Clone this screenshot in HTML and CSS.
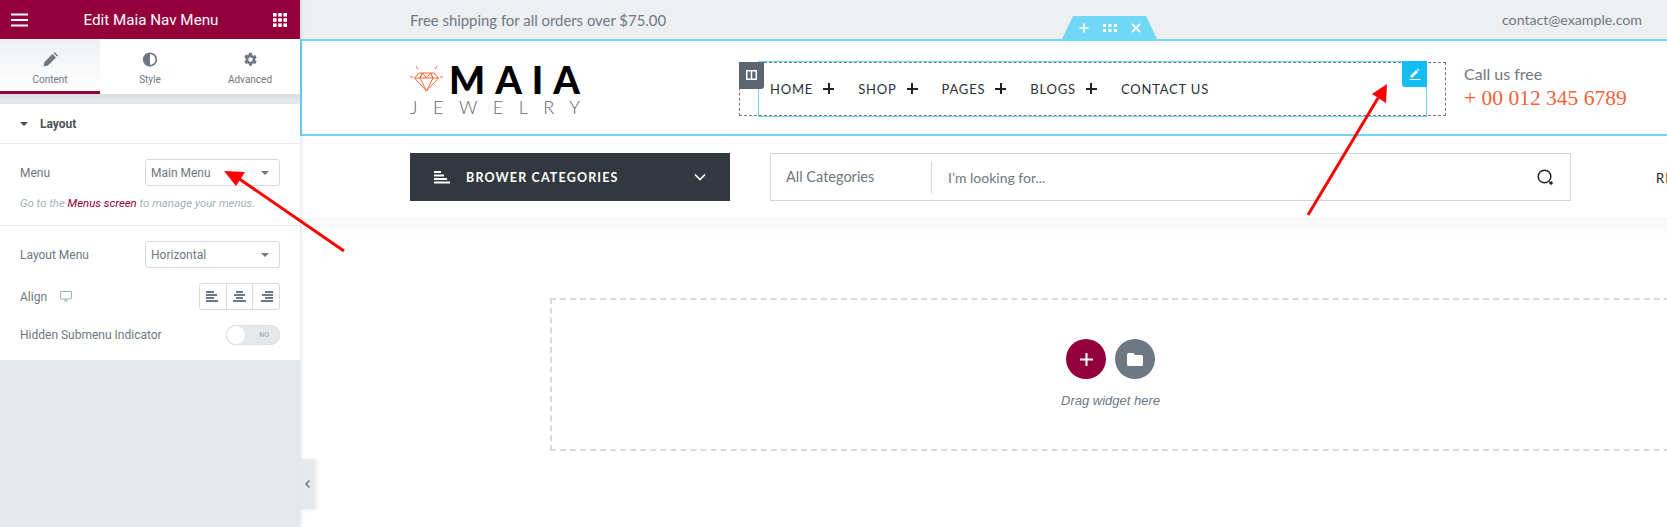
FILE: index.html
```html
<!DOCTYPE html>
<html lang="en">
<head>
<meta charset="utf-8">
<title>Edit Maia Nav Menu</title>
<link rel="stylesheet" href="styles.css">
</head>
<body>
<div class="app">
  <aside class="panel">
    <header class="panel-head">
      <svg class="hd-icon" width="18" height="14" viewBox="0 0 18 14"><path d="M0 1.500h17M0 7h17M0 12.500h17" stroke="#fff" stroke-width="2.200" fill="none"/></svg>
      <span class="panel-title">Edit Maia Nav Menu</span>
      <svg class="hd-icon" width="14" height="14" viewBox="0 0 14 14" fill="#fff"><rect width="3.600" height="3.600"/><rect x="5.200" width="3.600" height="3.600"/><rect x="10.400" width="3.600" height="3.600"/><rect y="5.200" width="3.600" height="3.600"/><rect x="5.200" y="5.200" width="3.600" height="3.600"/><rect x="10.400" y="5.200" width="3.600" height="3.600"/><rect y="10.400" width="3.600" height="3.600"/><rect x="5.200" y="10.400" width="3.600" height="3.600"/><rect x="10.400" y="10.400" width="3.600" height="3.600"/></svg>
    </header>
    <nav class="tabs">
      <div class="tab tab-active">
        <svg width="15" height="15" viewBox="0 0 15 15" fill="#6d7882"><path d="M0.500 14.500l1-4.500 8-8 3.500 3.500-8 8zM10.500 1l1-1 3.500 3.500-1 1z"/></svg>
        <span>Content</span>
      </div>
      <div class="tab">
        <svg width="16" height="16" viewBox="0 0 16 16"><circle cx="8" cy="8" r="6.700" fill="#fff" stroke="#6d7882" stroke-width="1.800"/><path d="M8 1a7 7 0 0 0 0 14z" fill="#6d7882"/></svg>
        <span>Style</span>
      </div>
      <div class="tab">
        <svg width="15" height="15" viewBox="0 0 24 24" fill="#6d7882"><path d="M19.400 13a7.600 7.600 0 0 0 0-2l2.500-1.900-2.400-4.200-3 1.200a7.400 7.400 0 0 0-1.700-1L14.400 1h-4.800l-.4 3.100a7.400 7.400 0 0 0-1.700 1l-3-1.200-2.400 4.200L4.600 11a7.600 7.600 0 0 0 0 2l-2.500 1.900 2.400 4.200 3-1.200a7.400 7.400 0 0 0 1.700 1l.4 3.100h4.800l.4-3.100a7.400 7.400 0 0 0 1.700-1l3 1.200 2.400-4.200zM12 15.500a3.500 3.500 0 1 1 0-7 3.500 3.500 0 0 1 0 7z"/></svg>
        <span>Advanced</span>
      </div>
    </nav>
    <div class="tabs-gap"></div>
    <section class="controls">
      <div class="section-title"><i class="caret caret-dark"></i><span>Layout</span></div>
      <div class="group group-first">
        <div class="row">
          <label>Menu</label>
          <div class="select"><span>Main Menu</span><i class="caret"></i></div>
        </div>
        <p class="help">Go to the <a>Menus screen</a> to manage your menus.</p>
      </div>
      <div class="group group-second">
        <div class="row">
          <label>Layout Menu</label>
          <div class="select"><span>Horizontal</span><i class="caret"></i></div>
        </div>
        <div class="row row-align">
          <label class="align-label">Align
            <svg width="12" height="11" viewBox="0 0 12 11"><path d="M1 .5h10a.5.500 0 0 1 .5.500v6.500a.5.500 0 0 1-.5.500H1a.5.500 0 0 1-.5-.5V1A.5.500 0 0 1 1 .5zM4 10h4" fill="none" stroke="#a4afb7"/><path d="M5.500 8h1v2h-1z" fill="#a4afb7"/></svg>
          </label>
          <div class="align-set">
            <div class="align-btn"><svg width="13" height="11" viewBox="0 0 13 11"><path d="M0 1h8M0 4h11M0 7h8M0 10h12" stroke="#6d7882" stroke-width="1.800"/></svg></div>
            <div class="align-btn"><svg width="13" height="11" viewBox="0 0 13 11"><path d="M3 1h7M1 4h11M3 7h7M0 10h13" stroke="#6d7882" stroke-width="1.800"/></svg></div>
            <div class="align-btn"><svg width="13" height="11" viewBox="0 0 13 11"><path d="M5 1h8M2 4h11M5 7h8M1 10h12" stroke="#6d7882" stroke-width="1.800"/></svg></div>
          </div>
        </div>
        <div class="row row-toggle">
          <label>Hidden Submenu Indicator</label>
          <div class="toggle"><i class="knob"></i><span>NO</span></div>
        </div>
      </div>
    </section>
    <div class="panel-fill"></div>
    <div class="collapse"><svg width="5" height="8" viewBox="0 0 5 8"><path d="M4.500.5L1 4l3.500 3.500" fill="none" stroke="#6d7882" stroke-width="1.500"/></svg></div>
  </aside>

  <main class="canvas">
    <div class="topbar">
      <span>Free shipping for all orders over $75.00</span>
      <span class="email">contact@example.com</span>
    </div>
    <div class="header-band">
      <div class="section-tools">
        <svg width="10" height="10" viewBox="0 0 10 10"><path d="M5 .5v9M.5 5h9" stroke="#fff" stroke-width="1.700"/></svg>
        <svg class="tool-dots" width="14" height="8" viewBox="0 0 14 8" fill="#fff"><rect width="3" height="3"/><rect x="5.500" width="3" height="3"/><rect x="11" width="3" height="3"/><rect y="5" width="3" height="3"/><rect x="5.500" y="5" width="3" height="3"/><rect x="11" y="5" width="3" height="3"/></svg>
        <svg width="10" height="10" viewBox="0 0 10 10"><path d="M1 1l8 8M9 1l-8 8" stroke="#fff" stroke-width="1.800"/></svg>
      </div>
      <div class="logo">
        <div class="logo-top">
          <svg width="33" height="27" viewBox="0 0 33 27" fill="none" stroke="#f26a35" stroke-width="1"><path d="M9 8h15l4.500 5L16.500 26 4.500 13zM4.500 13h24M12.500 8l-2.500 5 6.500 13 6.500-13-2.500-5M10 13l2.500-5 4 5 4-5 2.500 5M0 12h3M30 12h3M6 1l2 3M27 1l-2 3"/></svg>
          <span class="logo-name">MAIA</span>
        </div>
        <div class="logo-sub">JEWELRY</div>
      </div>
      <div class="nav-column">
        <div class="nav-widget">
          <ul class="menu">
            <li>HOME<b></b></li>
            <li>SHOP<b></b></li>
            <li>PAGES<b></b></li>
            <li>BLOGS<b></b></li>
            <li>CONTACT US</li>
          </ul>
          <div class="edit-btn"><svg width="12" height="12" viewBox="0 0 12 12" fill="#fff"><path d="M1.500 7.500L7 2l2 2-5.500 5.500H1.500zM7.800 1.200l.7-.7 2 2-.7.7zM0.500 11h11v1H.5z"/></svg></div>
        </div>
        <div class="col-handle"><svg width="11" height="10" viewBox="0 0 11 10"><path d="M.75.750h9.500v8.500H.75zM5.500.75v8.500" fill="none" stroke="#fff" stroke-width="1.500"/></svg></div>
      </div>
      <div class="call">
        <div class="call-label">Call us free</div>
        <div class="call-number">+ 00 012 345 6789</div>
      </div>
    </div>
    <div class="search-band">
      <div class="browse">
        <svg width="16" height="13" viewBox="0 0 16 13"><path d="M0 1h7M0 4.500h10M0 8h13M0 11.500h16" stroke="#fff" stroke-width="1.800"/></svg>
        <span class="browse-text">BROWER CATEGORIES</span>
        <svg width="12" height="8" viewBox="0 0 12 8"><path d="M1 1.500l5 5 5-5" fill="none" stroke="#fff" stroke-width="1.600"/></svg>
      </div>
      <div class="search">
        <span class="search-cat">All Categories</span>
        <span class="search-input">I’m looking for...</span>
        <svg width="17" height="17" viewBox="0 0 17 17"><circle cx="7.500" cy="7.500" r="6.300" fill="none" stroke="#1d2327" stroke-width="1.500"/><circle cx="14" cy="14" r="1.800" fill="#1d2327"/></svg>
      </div>
      <span class="re">RE</span>
    </div>
    <div class="drop-band">
      <div class="dropzone">
        <div class="drop-btns">
          <span class="round round-add"><svg width="13" height="13" viewBox="0 0 13 13"><path d="M6.500 0v13M0 6.500h13" stroke="#fff" stroke-width="2"/></svg></span>
          <span class="round round-folder"><svg width="16" height="13" viewBox="0 0 16 13" fill="#fff"><path d="M1.500 0h5l1.500 2h6.500A1.500 1.500 0 0 1 16 3.500v8a1.500 1.500 0 0 1-1.500 1.500h-13A1.500 1.500 0 0 1 0 11.500v-10A1.500 1.500 0 0 1 1.500 0z"/></svg></span>
        </div>
        <div class="drop-text">Drag widget here</div>
      </div>
    </div>
  </main>
</div>
<svg class="arrows" width="1667" height="527" viewBox="0 0 1667 527">
  <path d="M344 251L238 178" stroke="#f00" stroke-width="3" fill="none"/>
  <path d="M224 171L245 172 236 186z" fill="#f00"/>
  <path d="M1308 215L1378 98" stroke="#f00" stroke-width="3" fill="none"/>
  <path d="M1387 84L1386 103 1372 94z" fill="#f00"/>
</svg>
</body>
</html>
```

FILE: styles.css
```css
* { box-sizing: border-box; }
html, body { margin: 0; padding: 0; height: 100%; overflow: hidden; background: #fff; }
body { font-family: Roboto, "Liberation Sans", sans-serif; color: #6d7882; }
.app { display: flex; height: 527px; width: 1667px; position: relative; }

.panel { width: 300px; flex: none; display: flex; flex-direction: column; background: #e6e9ec; position: relative; box-shadow: 1px 0 4px rgba(0,0,0,.12); z-index: 2; }
.panel-head { height: 39px; background: #93003c; color: #fff; display: flex; align-items: center; justify-content: space-between; padding: 0 13px 0 11px; flex: none; }
.panel-title { font-size: 15.200px; font-weight: 400; }
.tabs { display: flex; height: 55px; background: #fff; flex: none; box-shadow: 0 2px 6px rgba(0,0,0,.08); position: relative; }
.tab { flex: 1; display: flex; flex-direction: column; align-items: center; padding-top: 13px; gap: 7px; font-size: 10px; color: #6d7882; }
.tab svg { height: 15px; }
.tab-active { background: linear-gradient(#eef0f2, #fff); border-bottom: 3px solid #93003c; }
.tabs-gap { height: 10px; flex: none; background: #e6e9ec; }
.controls { background: #fff; flex: none; height: 256px; }
.section-title { height: 40px; display: flex; align-items: center; padding-left: 20px; gap: 12px; font-size: 12px; font-weight: 700; color: #495157; border-bottom: 1px solid #e6e9ec; }
.caret { display: block; width: 0; height: 0; border-left: 4px solid transparent; border-right: 4px solid transparent; border-top: 4px solid #6d7882; }
.caret-dark { border-top-color: #495157; }
.group { padding: 0 20px 0; }
.group-first { padding-top: 15px; height: 82px; border-bottom: 1px solid #e6e9ec; }
.group-second { padding-top: 15px; }
.row { display: flex; justify-content: space-between; align-items: center; font-size: 12px; }
.row label { color: #6d7882; }
.select { width: 135px; height: 27px; border: 1px solid #d5dadf; border-radius: 3px; display: flex; align-items: center; justify-content: space-between; padding: 0 10px 0 5px; color: #6d7882; }
.help { margin: 10px 0 0; font-size: 11.400px; font-style: italic; color: #a4afb7; white-space: nowrap; }
.help a { color: #93003c; }
.row-align { margin-top: 15px; }
.align-label { display: flex; align-items: center; gap: 13px; }
.align-set { display: flex; width: 81px; height: 27px; border: 1px solid #d5dadf; border-radius: 3px; }
.align-btn { flex: 1; display: flex; align-items: center; justify-content: center; border-left: 1px solid #d5dadf; }
.align-btn:first-child { border-left: 0; }
.row-toggle { margin-top: 15px; }
.toggle { width: 54px; height: 20px; border-radius: 10px; background: #e6e9ec; box-shadow: inset 0 0 1px rgba(0,0,0,.3); position: relative; font-size: 7px; color: #a4afb7; display: flex; align-items: center; justify-content: flex-end; padding-right: 11px; font-weight: 500; }
.knob { position: absolute; left: 1px; top: 1px; width: 18px; height: 18px; border-radius: 50%; background: #fff; }
.panel-fill { flex: 1; background: #e6e9ec; }
.collapse { position: absolute; left: 300px; top: 459px; width: 15px; height: 50px; background: #e6e9ec; display: flex; align-items: center; justify-content: center; box-shadow: 2px 1px 4px rgba(0,0,0,.08); }

.canvas { flex: 1; min-width: 0; display: flex; flex-direction: column; font-family: Lato, "Liberation Sans", sans-serif; overflow: hidden; }
.topbar { height: 39px; background: #eeeff1; display: flex; justify-content: space-between; align-items: center; padding: 0 25px 0 110px; font-size: 14.900px; color: #6d7882; }
.email { font-size: 14.200px; }
.header-band { height: 97px; border: 2px solid #71d7f7; border-right: 0; background: #fff; display: flex; align-items: center; padding-left: 108px; position: relative; }
.section-tools { position: absolute; left: 760px; top: -25px; width: 95px; height: 23px; background: #71d7f7; clip-path: polygon(11px 0, 84px 0, 95px 100%, 0 100%); display: flex; align-items: center; justify-content: center; gap: 14px; padding-top: 1px; }
.logo { width: 329px; flex: none; padding-top: 2px; }
.logo-top { display: flex; align-items: center; height: 32px; gap: 6px; }
.logo-name { font-family: Lato, sans-serif; font-weight: 900; font-size: 38px; letter-spacing: 10px; color: #000; line-height: 32px; }
.logo-sub { font-size: 18px; font-weight: 300; letter-spacing: 15.500px; color: #666; line-height: 16px; margin-top: 4px; }
.nav-column { width: 707px; height: 54px; border: 1px dashed #6d7882; position: relative; flex: none; margin-top: 2px; }
.nav-widget { position: absolute; left: 18px; top: -2px; width: 669px; height: 56px; border: 1px solid #71d7f7; display: flex; align-items: center; padding-left: 11px; }
.menu { list-style: none; margin: 0; padding: 0; display: flex; font-size: 13px; letter-spacing: .8px; color: #2a2f3a; }
.menu li { display: flex; align-items: center; margin-right: 24px; }
.menu b { display: block; width: 11px; height: 11px; margin-left: 10px; background: linear-gradient(#1d2327,#1d2327) center/11px 2px no-repeat, linear-gradient(#1d2327,#1d2327) center/2px 11px no-repeat; }
.edit-btn { position: absolute; right: -1px; top: -1px; width: 25px; height: 26px; background: #12bdf3; border-radius: 0 0 0 3px; display: flex; align-items: center; justify-content: center; }
.col-handle { position: absolute; left: -1px; top: -1px; width: 25px; height: 27px; background: #5b6670; border-radius: 0 0 3px 0; display: flex; align-items: center; justify-content: center; }
.call { margin-left: 18px; margin-top: 0; }
.call-label { font-size: 16px; color: #6d7882; line-height: 20px; }
.call-number { font-family: "Liberation Serif", serif; font-size: 21.500px; color: #f4623a; line-height: 26px; white-space: nowrap; margin-top: 1px; }
.search-band { height: 82px; background: #fff; display: flex; align-items: flex-start; padding: 17px 0 0 110px; position: relative; }
.browse { width: 320px; height: 48px; background: #32383f; color: #fff; display: flex; align-items: center; padding: 0 24px; flex: none; }
.browse-text { flex: 1; margin-left: 16px; font-size: 12.500px; font-weight: 700; letter-spacing: 1.150px; }
.search { margin-left: 40px; width: 801px; height: 48px; border: 1px solid #d5d5d5; display: flex; align-items: center; padding-right: 16px; font-size: 14px; flex: none; }
.search-cat { width: 161px; padding-left: 15px; color: #6d7882; font-size: 14.500px; border-right: 1px solid #d5d5d5; line-height: 32px; flex: none; }
.search-input { flex: 1; padding-left: 16px; color: #6d7882; }
.re { margin-left: 85px; margin-top: 17px; font-size: 13px; color: #1d2327; letter-spacing: 1px; }
.drop-band { flex: 1; padding: 80px 0 0 250px; background: linear-gradient(#f6f6f6, #fff 18px); }
.dropzone { width: 1200px; height: 153px; border: 2px dashed #d5dadf; display: flex; flex-direction: column; padding-left: 514px; padding-top: 39px; margin-right: -200px; }
.drop-btns { display: flex; gap: 9px; }
.round { width: 40px; height: 40px; border-radius: 50%; display: flex; align-items: center; justify-content: center; flex: none; }
.round-add { background: #93003c; }
.round-folder { background: #6d7882; }
.drop-text { font-family: "Liberation Sans", sans-serif; font-style: italic; font-size: 13px; color: #6d7882; margin-top: 14px; margin-left: -5px; white-space: nowrap; }
.arrows { position: absolute; left: 0; top: 0; pointer-events: none; z-index: 5; }
```
